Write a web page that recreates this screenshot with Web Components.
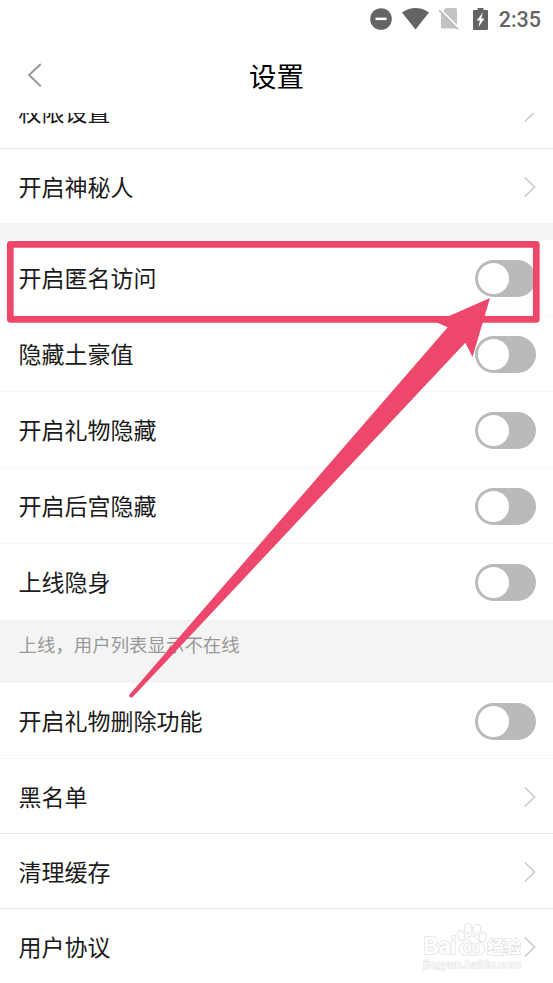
<!DOCTYPE html>
<html lang="zh-CN">
<head>
<meta charset="utf-8">
<title>设置</title>
<style>
  body {
    margin: 0;
    background: #fff;
    font-family: "Noto Sans CJK SC", sans-serif;
    color: #1b1b1b;
  }
</style>
</head>
<body>
<settings-page>
  <status-bar slot="status" time="2:35"></status-bar>
  <title-bar slot="header">设置</title-bar>

  <setting-row type="link">权限设置</setting-row>
  <setting-row type="link" last>开启神秘人</setting-row>
  <section-note style="--note-height: 17px"></section-note>
  <setting-row type="switch">开启匿名访问</setting-row>
  <setting-row type="switch">隐藏土豪值</setting-row>
  <setting-row type="switch">开启礼物隐藏</setting-row>
  <setting-row type="switch">开启后宫隐藏</setting-row>
  <setting-row type="switch" last>上线隐身</setting-row>
  <section-note style="--note-height: 63px">上线，用户列表显示不在线</section-note>
  <setting-row type="switch">开启礼物删除功能</setting-row>
  <setting-row type="link">黑名单</setting-row>
  <setting-row type="link">清理缓存</setting-row>
  <setting-row type="link">用户协议</setting-row>

  <site-watermark slot="overlay"></site-watermark>
  <arrow-callout slot="overlay"></arrow-callout>
</settings-page>

<script>
class SettingsPage extends HTMLElement {
  constructor() {
    super();
    this.attachShadow({ mode: 'open' });
    this.shadowRoot.innerHTML = `
      <style>
        :host {
          display: flex;
          flex-direction: column;
          position: relative;
          width: 553px;
          height: 983px;
          overflow: hidden;
          background: #fff;
        }
        .scroll {
          flex: 1;
          min-height: 0;
          overflow: hidden;
        }
        /* the list is scrolled, so its first row is cut off by the header */
        .list {
          display: flex;
          flex-direction: column;
          margin-top: -39px;
        }
      </style>
      <slot name="status"></slot>
      <slot name="header"></slot>
      <div class="scroll"><div class="list"><slot></slot></div></div>
      <slot name="overlay"></slot>
    `;
  }
}

class StatusBar extends HTMLElement {
  constructor() {
    super();
    this.attachShadow({ mode: 'open' });
  }

  connectedCallback() {
    this.shadowRoot.innerHTML = `
      <style>
        :host {
          display: flex;
          align-items: center;
          justify-content: flex-end;
          box-sizing: border-box;
          height: 37px;
          padding-right: 12px;
          color: #646464;
          font: 500 21.500px/37px Roboto, sans-serif;
        }
        svg { display: block; fill: currentColor; }
        .dnd { margin-right: 10px; }
        .wifi { margin-right: 10px; }
        .sim { margin-right: 14px; }
        .battery { margin-right: 11px; }
        .time { padding-top: 2px; }
      </style>
      <svg class="dnd" width="22" height="22" viewBox="0 0 22 22">
        <circle cx="11" cy="11" r="10.8"/>
        <path d="M5.500 9.600h11v2.500h-11z" fill="#fff"/>
      </svg>
      <svg class="wifi" width="27" height="22" viewBox="0 0 27 22">
        <path d="M0 4.400Q13.500 -4.400 27 4.400L13.500 21.500z"/>
      </svg>
      <svg class="sim" width="20" height="23" viewBox="0 0 20 23">
        <path d="M7 1h9.500q1.500 0 1.500 1.500V21.500H3.500Q2 21.500 2 20V6z" fill="#c3c3c3"/>
        <path d="M1.200 2.200L20 21.500" stroke="#fff" stroke-width="2"/>
        <path d="M.3 3.300L19 22.300" stroke="#bbb" stroke-width="1.600"/>
      </svg>
      <svg class="battery" width="15" height="22" viewBox="0 0 15 22">
        <path d="M4.500 0h6v2H14q1 0 1 1v18q0 1-1 1H1q-1 0-1-1V3q0-1 1-1h3.500z"/>
        <path d="M9.800 4.500L3.700 12.500h3.200L5.500 19L11.500 10.500H8.300z" fill="#fff"/>
      </svg>
      <span class="time">${this.getAttribute('time')}</span>
    `;
  }
}

class TitleBar extends HTMLElement {
  constructor() {
    super();
    this.attachShadow({ mode: 'open' });
    this.shadowRoot.innerHTML = `
      <style>
        :host {
          display: grid;
          grid-template-columns: 60px 1fr 60px;
          align-items: center;
          height: 76px;
          color: #000;
          font-size: 27.500px;
          line-height: 40px;
        }
        svg { display: block; margin-left: 27px; }
        .title { text-align: center; }
      </style>
      <svg width="16" height="26" viewBox="0 0 16 26">
        <path d="M13.200 2.500L2.200 13L13.200 23.700" fill="none" stroke="#999" stroke-width="2" stroke-linecap="round"/>
      </svg>
      <div class="title"><slot></slot></div>
    `;
  }
}

class SettingRow extends HTMLElement {
  constructor() {
    super();
    this.attachShadow({ mode: 'open' });
  }

  connectedCallback() {
    const control = this.getAttribute('type') === 'switch'
      ? '<toggle-switch></toggle-switch>'
      : `<svg width="12" height="20" viewBox="0 0 12 20">
           <path d="M1.300 1L10.600 10L1.300 19" fill="none" stroke="#ccc" stroke-width="1.700" stroke-linecap="round"/>
         </svg>`;

    this.shadowRoot.innerHTML = `
      <style>
        :host {
          display: flex;
          align-items: center;
          justify-content: space-between;
          box-sizing: border-box;
          height: 75px;
          padding: 1px 17px 0 18.500px;
          border-bottom: 1px solid #e8e8e8;
          background: #fff;
          font-size: 23px;
          line-height: 34px;
        }
        :host([type="switch"]) {
          height: 76px;
          border-bottom-color: #f6f6f6;
        }
        :host([last]) { border-bottom-color: transparent; }
        :host([type="link"][last]) {
          height: 74px;
          border-bottom: 0;
        }
        .label { padding-bottom: 2px; }
        svg { display: block; }
      </style>
      <span class="label"><slot></slot></span>
      ${control}
    `;
  }
}

class ToggleSwitch extends HTMLElement {
  constructor() {
    super();
    this.attachShadow({ mode: 'open' });
    this.shadowRoot.innerHTML = `
      <style>
        :host {
          display: flex;
          align-items: center;
          box-sizing: border-box;
          width: 61.500px;
          height: 37px;
          padding-left: 3px;
          border-radius: 19px;
          background: #bababa;
        }
        .knob {
          width: 31px;
          height: 31px;
          border-radius: 50%;
          background: #fff;
        }
      </style>
      <div class="knob"></div>
    `;
  }
}

class SectionNote extends HTMLElement {
  constructor() {
    super();
    this.attachShadow({ mode: 'open' });
    this.shadowRoot.innerHTML = `
      <style>
        :host {
          display: block;
          box-sizing: border-box;
          height: var(--note-height);
          padding: 10px 18.500px 0;
          background: #f4f4f4;
          color: #999;
          font-size: 18.450px;
          line-height: 28px;
          overflow: hidden;
        }
      </style>
      <slot></slot>
    `;
  }
}

class SiteWatermark extends HTMLElement {
  constructor() {
    super();
    this.attachShadow({ mode: 'open' });
    this.shadowRoot.innerHTML = `
      <style>
        :host {
          position: absolute;
          left: 420px;
          top: 918px;
          width: 110px;
          height: 58px;
        }
        svg { display: block; }
        text {
          fill: #fff;
          stroke: #e2e2e2;
          stroke-width: 1.600px;
          stroke-linejoin: round;
          paint-order: stroke;
          font-family: "Liberation Sans", sans-serif;
        }
        .bold { font-weight: bold; }
        .cjk { font-family: "Noto Sans CJK SC", sans-serif; }
        .paw { fill: #fff; stroke: #e0e0e0; stroke-width: 1; }
        .url { stroke-width: 1.200px; }
      </style>
      <svg width="110" height="58" viewBox="0 0 110 58">
        <text class="bold" x="3.500" y="36" font-size="23" textLength="33" lengthAdjust="spacingAndGlyphs">Bai</text>
        <g class="paw">
          <ellipse cx="41.200" cy="17.500" rx="3.600" ry="5" transform="rotate(-15 41.200 17.500)"/>
          <ellipse cx="48.300" cy="10.500" rx="3.700" ry="5.300"/>
          <ellipse cx="56.800" cy="11.500" rx="3.700" ry="5.300" transform="rotate(10 56.800 11.500)"/>
          <ellipse cx="62.800" cy="19" rx="3.600" ry="5" transform="rotate(15 62.800 19)"/>
          <path d="M52 18C47 18 46 23 41.500 26C37 29.500 38.500 37 45 37H59C65.500 37 66.500 29.500 62 26C57.500 23 57 18 52 18z"/>
        </g>
        <text class="bold" x="43.500" y="34" font-size="14" textLength="16" lengthAdjust="spacingAndGlyphs">du</text>
        <text class="cjk bold" x="67" y="34.500" font-size="17.500" textLength="34" lengthAdjust="spacingAndGlyphs">经验</text>
        <text class="url" x="3" y="49.500" font-size="11" textLength="98" lengthAdjust="spacingAndGlyphs">jingyan.baidu.com</text>
      </svg>
    `;
  }
}

// Frame round one row, with an arrow that points at its switch
class ArrowCallout extends HTMLElement {
  constructor() {
    super();
    this.attachShadow({ mode: 'open' });
    this.shadowRoot.innerHTML = `
      <style>
        :host {
          position: absolute;
          inset: 0;
          pointer-events: none;
        }
        svg { display: block; }
      </style>
      <svg width="553" height="983" viewBox="0 0 553 983">
        <rect x="10.300" y="244.300" width="526" height="75" fill="none" stroke="#ee476c" stroke-width="6.700" stroke-linejoin="round"/>
        <path d="M490 298L435.500 322L447.700 327.200L129.300 694.800Q128.700 696.500 130 697.300Q131.500 698 132.700 697L465.300 342.700L472.500 357z" fill="#ee476c"/>
      </svg>
    `;
  }
}

customElements.define('toggle-switch', ToggleSwitch);
customElements.define('settings-page', SettingsPage);
customElements.define('status-bar', StatusBar);
customElements.define('title-bar', TitleBar);
customElements.define('setting-row', SettingRow);
customElements.define('section-note', SectionNote);
customElements.define('site-watermark', SiteWatermark);
customElements.define('arrow-callout', ArrowCallout);
</script>
</body>
</html>
